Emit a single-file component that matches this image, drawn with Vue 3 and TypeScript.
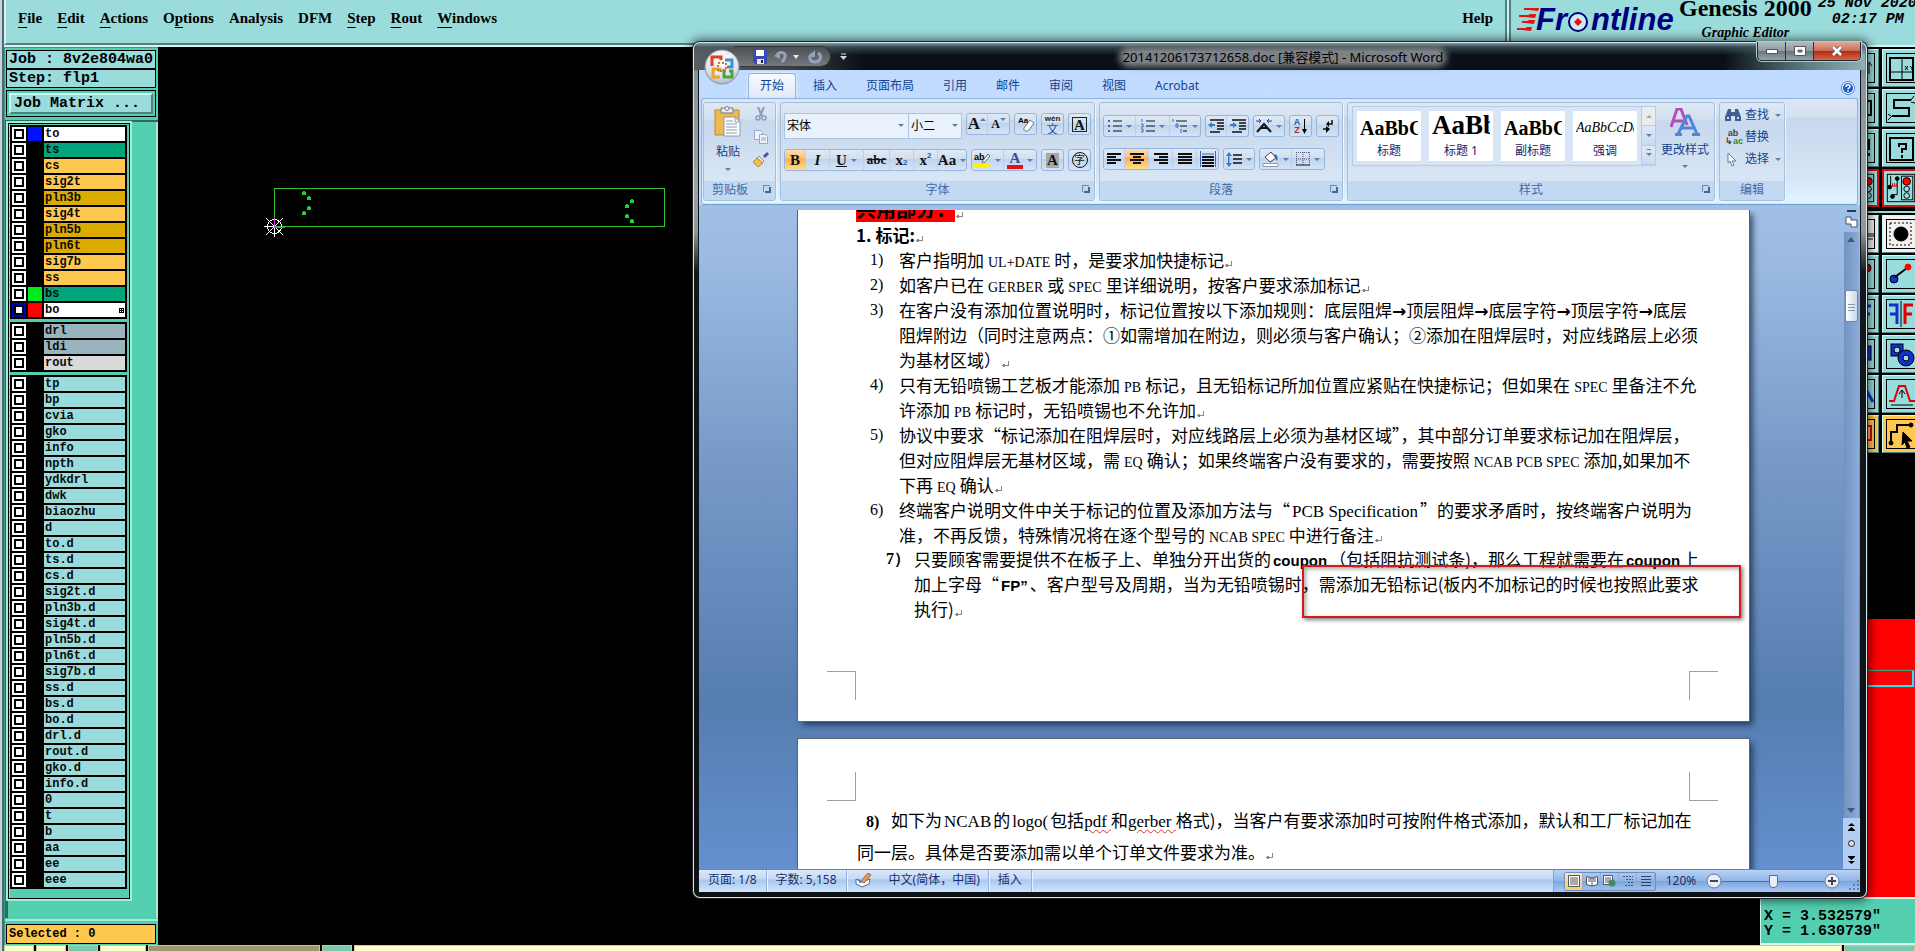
<script setup lang="ts">
import { ref } from 'vue'

interface Layer { name: string; bg: string; swatch?: string; active?: boolean }
interface Seg { text: string; kind: 'cjk' | 'en' | 'bold' | 'roman' | 'typo' | 'arrow' | 'mark' }

const menus = [
  { pre: '', key: 'F', post: 'ile' },
  { pre: '', key: 'E', post: 'dit' },
  { pre: '', key: 'A', post: 'ctions' },
  { pre: 'O', key: 'p', post: 'tions' },
  { pre: 'Analysis', key: '', post: '' },
  { pre: 'DFM', key: '', post: '' },
  { pre: '', key: 'S', post: 'tep' },
  { pre: '', key: 'R', post: 'out' },
  { pre: '', key: 'W', post: 'indows' },
]

const AMBER = '#ffc84f'
const GOLD = '#dbab00'
const GREEN = '#00a57c'
const CYAN = '#9adbdb'

const board: Layer[] = [
  { name: 'to', bg: '#ffffff', swatch: '#0010ff' },
  { name: 'ts', bg: GREEN },
  { name: 'cs', bg: AMBER },
  { name: 'sig2t', bg: AMBER },
  { name: 'pln3b', bg: GOLD },
  { name: 'sig4t', bg: AMBER },
  { name: 'pln5b', bg: GOLD },
  { name: 'pln6t', bg: GOLD },
  { name: 'sig7b', bg: AMBER },
  { name: 'ss', bg: AMBER },
  { name: 'bs', bg: GREEN, swatch: '#00ea1c' },
  { name: 'bo', bg: '#ffffff', swatch: '#ff0000', active: true },
]
const drills: Layer[] = [
  { name: 'drl', bg: '#9ab4bd' },
  { name: 'ldi', bg: '#9ab4bd' },
  { name: 'rout', bg: '#dadada' },
]
const misc: Layer[] = [
  'tp', 'bp', 'cvia', 'gko', 'info', 'npth', 'ydkdrl', 'dwk', 'biaozhu', 'd', 'to.d', 'ts.d', 'cs.d',
  'sig2t.d', 'pln3b.d', 'sig4t.d', 'pln5b.d', 'pln6t.d', 'sig7b.d', 'ss.d', 'bs.d', 'bo.d', 'drl.d',
  'rout.d', 'gko.d', 'info.d', '0', 't', 'b', 'aa', 'ee', 'eee',
].map((name) => ({ name, bg: CYAN }))
const groups = [board, drills, misc]

const tabs = ['开始', '插入', '页面布局', '引用', '邮件', '审阅', '视图', 'Acrobat']
const styles = [
  { sample: 'AaBbC', label: '标题', cls: 's1' },
  { sample: 'AaBb', label: '标题 1', cls: 's2' },
  { sample: 'AaBbC', label: '副标题', cls: 's1' },
  { sample: 'AaBbCcDd', label: '强调', cls: 's4' },
]

/* *x* bold latin, _x_ roman latin, ~x~ flagged by the spelling checker, plain latin is narrow */
function parse(line: string): Seg[] {
  const out: Seg[] = []
  const re = /(\*[^*]+\*|_[^_]+_|~[^~]+~|→|¶| ?[A-Za-z+][A-Za-z+ ]*)/
  for (const part of line.split(re)) {
    if (!part) continue
    const inner = part.slice(1, -1)
    if (part[0] === '*') out.push({ text: inner, kind: 'bold' })
    else if (part[0] === '_') out.push({ text: inner, kind: 'roman' })
    else if (part[0] === '~') out.push({ text: inner, kind: 'typo' })
    else if (part === '→') out.push({ text: part, kind: 'arrow' })
    else if (part === '¶') out.push({ text: '', kind: 'mark' })
    else if (/^ ?[A-Za-z+]/.test(part)) out.push({ text: part.trim(), kind: 'en' })
    else out.push({ text: part, kind: 'cjk' })
  }
  return out
}

const items = [
  { no: '1)', lines: ['客户指明加 UL+DATE 时，是要求加快捷标记¶'] },
  { no: '2)', lines: ['如客户已在 GERBER 或 SPEC 里详细说明，按客户要求添加标记¶'] },
  { no: '3)', lines: [
    '在客户没有添加位置说明时，标记位置按以下添加规则：底层阻焊→顶层阻焊→底层字符→顶层字符→底层',
    '阻焊附边（同时注意两点：①如需增加在附边，则必须与客户确认；②添加在阻焊层时，对应线路层上必须',
    '为基材区域）¶'] },
  { no: '4)', lines: [
    '只有无铅喷锡工艺板才能添加 PB 标记，且无铅标记所加位置应紧贴在快捷标记；但如果在 SPEC 里备注不允',
    '许添加 PB 标记时，无铅喷锡也不允许加¶'] },
  { no: '5)', lines: [
    '协议中要求“标记添加在阻焊层时，对应线路层上必须为基材区域”，其中部分订单要求标记加在阻焊层，',
    '但对应阻焊层无基材区域，需 EQ 确认；如果终端客户没有要求的，需要按照 NCAB PCB SPEC 添加,如果加不',
    '下再 EQ 确认¶'] },
  { no: '6)', lines: [
    '终端客户说明文件中关于标记的位置及添加方法与“_PCB Specification_”的要求矛盾时，按终端客户说明为',
    '准，不再反馈，特殊情况将在逐个型号的 NCAB SPEC 中进行备注¶'] },
  { no: '7）', strong: true, lines: [
    '只要顾客需要提供不在板子上、单独分开出货的*coupon*（包括阻抗测试条)，那么工程就需要在*coupon*上',
    '加上字母“*FP”*、客户型号及周期，当为无铅喷锡时，需添加无铅标记(板内不加标记的时候也按照此要求',
    '执行)¶'] },
].map((i) => ({ no: i.no, strong: 'strong' in i, lines: i.lines.map(parse) }))

const last = [
  '如下为_NCAB_的_logo(_包括~pdf ~和~gerber ~格式)，当客户有要求添加时可按附件格式添加，默认和工厂标记加在',
  '同一层。具体是否要添加需以单个订单文件要求为准。¶',
].map(parse)

const zoom = ref(50)
</script>

<template>
  <div class="desk">
    <header class="top">
      <nav class="menubar">
        <button v-for="m in menus" :key="m.pre + m.key + m.post" class="menu">{{ m.pre }}<u v-if="m.key">{{ m.key }}</u>{{ m.post }}</button>
        <button class="menu help">Help</button>
      </nav>
      <div class="brand">
        <svg class="logo" width="160" height="36" viewBox="0 0 160 36">
          <g fill="#e8120c">
            <path d="M8 8H23L22 10H8zM3 15H20L19 17H3zM6 21H18L17 23H6zM1 28H15L14 30H1z" />
            <path d="M13 10l4-2h6l-1 3zM9 17l5-3h6l-1 4zM9 23l4-3h6l-1 4zM6 30l5-3h5l-1 4z" />
          </g>
          <g fill="#00007e" font-family="Liberation Sans, Arial, sans-serif" font-weight="700" font-style="italic" font-size="31">
            <text x="20" y="30">Fr</text>
            <text x="75" y="30">ntline</text>
          </g>
          <circle cx="62" cy="22" r="9" fill="#cfeaf0" stroke="#00007e" stroke-width="2" />
          <path d="M62 18l4 4-4 4-4-4z" fill="#e8120c" />
        </svg>
        <div class="product">
          <strong>Genesis 2000</strong>
          <em>Graphic Editor</em>
        </div>
        <div class="clock"><span>25 Nov 2020</span><span>02:17 PM</span></div>
      </div>
    </header>

    <main class="work">
      <aside class="left">
        <div class="jobs">
          <div class="field">Job : 8v2e804wa0</div>
          <div class="field">Step: flp1</div>
          <div class="matrix"><button>Job Matrix ...</button></div>
        </div>
        <div class="listwrap">
          <div class="list">
            <ul v-for="(g, gi) in groups" :key="gi" class="layers">
              <li v-for="l in g" :key="l.name">
                <label>
                  <input type="checkbox" :class="{ active: l.active }" />
                  <i class="swatch" :style="{ background: l.swatch ?? '#000' }"></i>
                  <span class="lname" :style="{ background: l.bg }">{{ l.name }}
                    <svg v-if="l.active" width="5" height="5" viewBox="0 0 5 5"><path d="M0 0h5v5H0z" /><path d="M1 1h1v1H1zM3 1h1v1H3zM1 3h1v1H1zM3 3h1v1H3z" fill="#fff" /></svg>
                  </span>
                </label>
              </li>
            </ul>
          </div>
        </div>
        <div class="selected"><div>Selected : 0</div></div>
      </aside>

      <section class="canvas">
        <svg width="560" height="220" viewBox="158 47 560 220" shape-rendering="crispEdges">
          <rect x="274.5" y="188.5" width="390" height="38" fill="none" stroke="#35c035" />
          <g fill="#1fcf2f">
            <path id="dot" d="M303 191h2v1h1v3h-4v-3h1z" />
            <use href="#dot" x="5" y="5" /><use href="#dot" x="5" y="15" /><use href="#dot" y="20" />
            <use href="#dot" x="328" y="8" /><use href="#dot" x="323" y="13" /><use href="#dot" x="323" y="23" /><use href="#dot" x="328" y="28" />
          </g>
          <g stroke="#fff" fill="none">
            <circle cx="274.5" cy="226.5" r="7" />
            <path d="M264 226.5h10M274.5 227v10M266 218l17 17M283 218l-17 17" />
            <path d="M274.5 217v10h10" stroke="#d23cd2" />
          </g>
        </svg>
      </section>

      <aside class="right">
        <div class="tools">
          <button class="tool" aria-label="Zoom fit"><svg viewBox="0 0 36 36"><rect x="3.500" y="3.500" width="29" height="29" /><path d="M27 24V12l3 4" /></svg></button>
          <button class="tool" aria-label="Window coordinates"><svg viewBox="0 0 36 36"><rect x="3.500" y="3.500" width="29" height="29" /><path stroke-width="2" d="M7 8h23v22H7z" /><path d="M19 8v22M7 22h23M22 16l3 4M25 16l-3 4M27 16l2 2 2-2M29 18v2" /></svg></button>
          <button class="tool" aria-label="Shape"><svg viewBox="0 0 36 36"><rect x="3.500" y="3.500" width="29" height="29" /><path stroke-width="2" d="M23 11h6v14h-6" /></svg></button>
          <button class="tool" aria-label="Path"><svg viewBox="0 0 36 36"><rect x="3.500" y="3.500" width="29" height="29" /><path stroke-width="2" d="M28 10H11v8h15v8H9" /><path d="M28 10l3-4M9 26l-4 4M28 12l4 1M5 24l3 2" /></svg></button>
          <button class="tool" aria-label="Warning"><svg viewBox="0 0 36 36"><rect x="3.500" y="3.500" width="29" height="29" /><path stroke-width="2" d="M27 9v11M27 23v3" /></svg></button>
          <button class="tool" aria-label="Query"><svg viewBox="0 0 36 36"><rect x="3.500" y="3.500" width="29" height="29" /><path stroke-width="2" d="M7 8h23v22H7z" /><path stroke-width="2" d="M16 17v-3h7v5h-4v4M19 25v3" /></svg></button>
          <button class="tool hot" aria-label="Netlist left"><svg viewBox="0 0 36 36"><rect x="3.500" y="3.500" width="29" height="29" /><circle cx="27" cy="11" r="4" fill="#f00" /><circle cx="27" cy="19" r="3" /><circle cx="27" cy="26" r="3" /></svg></button>
          <button class="tool hot" aria-label="Netlist"><svg viewBox="0 0 36 36"><rect x="3.500" y="3.500" width="29" height="29" /><path d="M7 5v12M14 8v17H9" /><g fill="#000"><circle cx="6" cy="17" r="2" /><circle cx="14" cy="8" r="2" /><circle cx="9" cy="27" r="2" /></g><path stroke="#e00000" d="M8 16h6M9 13v3M11 13v3M13 13v3" /><rect x="18.500" y="5.500" width="12" height="25" /><circle cx="24" cy="11" r="4" fill="#f00" /><circle cx="24" cy="19" r="3" /><circle cx="24" cy="26" r="3" /></svg></button>
        </div>
        <div class="tools plain">
          <button class="tool" aria-label="Select left"><svg viewBox="0 0 36 36"><rect x="3.500" y="3.500" width="29" height="29" /><path d="M25 17v6h6M27 17v4M29 17v4M31 17v4" /></svg></button>
          <button class="tool" aria-label="Select frame"><svg viewBox="0 0 36 36"><rect x="3.500" y="3.500" width="29" height="29" /><path stroke-dasharray="2 2" d="M7 7h21v22H7z" /><circle cx="18" cy="18" r="7" fill="#000" /></svg></button>
          <button class="tool" aria-label="Move"><svg viewBox="0 0 36 36"><rect x="3.500" y="3.500" width="29" height="29" /><circle cx="25" cy="12" r="4" fill="#e00" /></svg></button>
          <button class="tool" aria-label="Reconnect"><svg viewBox="0 0 36 36"><rect x="3.500" y="3.500" width="29" height="29" /><circle cx="11" cy="23" r="4" fill="#1030d0" /><path stroke-width="2" d="M12 21L24 12" /><circle cx="25" cy="11" r="3" fill="#f00" stroke="#f00" /></svg></button>
          <button class="tool" aria-label="Mirror left"><svg viewBox="0 0 36 36"><rect x="3.500" y="3.500" width="29" height="29" /><path stroke="#1030d0" stroke-width="3" d="M22 27V10h7M22 18h6" /></svg></button>
          <button class="tool" aria-label="Mirror"><svg viewBox="0 0 36 36"><rect x="3.500" y="3.500" width="29" height="29" /><path stroke="#1030d0" stroke-width="3" d="M14 28V9H6M14 18H7" /><path stroke="#e00000" stroke-width="3" d="M22 28V9h8M22 18h7" /><path d="M18 5v26" /></svg></button>
          <button class="tool" aria-label="Copy left"><svg viewBox="0 0 36 36"><rect x="3.500" y="3.500" width="29" height="29" /><rect x="20" y="10" width="9" height="14" fill="#1030d0" /></svg></button>
          <button class="tool" aria-label="Copy"><svg viewBox="0 0 36 36"><rect x="3.500" y="3.500" width="29" height="29" /><g fill="#1030d0"><rect x="8" y="8" width="12" height="12" /><circle cx="23" cy="22" r="8" /></g><circle cx="14" cy="14" r="3" fill="#9adbdb" /><circle cx="23" cy="22" r="3" fill="#9adbdb" /></svg></button>
          <button class="tool" aria-label="Stretch left"><svg viewBox="0 0 36 36"><rect x="3.500" y="3.500" width="29" height="29" /><path stroke="#1030d0" stroke-width="3" d="M22 10l9 16" /></svg></button>
          <button class="tool" aria-label="Stretch"><svg viewBox="0 0 36 36"><rect x="3.500" y="3.500" width="29" height="29" /><path stroke="#e00000" stroke-width="2" d="M6 25h5l5-15h6l5 15h5" /><path d="M19 22v-8l-3 4M19 14l3 4M8 29h22" /></svg></button>
          <button class="tool amber" aria-label="Route left"><svg viewBox="0 0 36 36"><rect x="3.500" y="3.500" width="29" height="29" /><path stroke="#e00000" stroke-width="2" d="M22 10h7v14h-7" /></svg></button>
          <button class="tool amber" aria-label="Route"><svg viewBox="0 0 36 36"><rect x="3.500" y="3.500" width="29" height="29" /><path stroke-width="2" d="M8 27V16h6V9h14" /><circle cx="8" cy="27" r="2" fill="#000" /><circle cx="28" cy="9" r="2" fill="#000" /><path fill="#000" d="M20 16l9 9h-5l3 6-3 1-2-6-3 3z" /></svg></button>
        </div>
        <div class="overview"><i></i></div>
        <div class="coords"><span>X = 3.532579"</span><span>Y = 1.630739"</span></div>
      </aside>
    </main>
    <footer class="strip"><i class="y a"></i><i class="y a"></i><i class="t a"></i><i class="y b"></i><i class="g"></i><i class="t a"></i><i class="y c"></i><i class="t d"></i></footer>

    <article class="word">
      <div class="title">
        <div class="orb">
          <svg width="38" height="38" viewBox="0 0 38 38">
            <defs><radialGradient id="orbg" cx="50%" cy="30%" r="70%"><stop offset="0" stop-color="#fff" /><stop offset="0.7" stop-color="#dfe3ea" /><stop offset="1" stop-color="#a9b3c2" /></radialGradient></defs>
            <circle cx="19" cy="19" r="17" fill="url(#orbg)" stroke="#8c97a8" />
            <g fill="none" stroke-width="3">
              <path d="M9 18V9h9v3" stroke="#d8451c" /><path d="M22 12h7v7h-5" stroke="#3f8fd6" />
              <path d="M17 29h-7v-8h7v3" stroke="#f0a51e" /><path d="M21 21v8h8v-6h-3" stroke="#4ea43c" />
            </g>
            <path d="M15 15h8v8h-8z" fill="none" stroke="#c7742c" stroke-width="2" stroke-dasharray="2 2" />
          </svg>
        </div>
        <div class="qat">
          <button aria-label="保存"><svg width="14" height="14" viewBox="0 0 14 14"><path d="M0 0h14v14H2l-2-2z" fill="#3a49b8" /><path d="M3 0h8v6H3z" fill="#fff" /><path d="M4 9h7v5H4z" fill="#dfe5f5" /><path d="M8 10h2v3H8z" fill="#223" /></svg></button>
          <button aria-label="撤消"><svg width="14" height="14" viewBox="0 0 14 14"><path d="M3 4c5-3 9-1 8 3-.5 2-3 5-3 5" fill="none" stroke="#93a3bd" stroke-width="3" /><path d="M0 6l6-5v8z" fill="#93a3bd" /></svg></button>
          <svg class="gap" width="6" height="4" viewBox="0 0 6 4"><path d="M0 0h6L3 4z" fill="#e8e8e8" /></svg>
          <button aria-label="重复"><svg width="14" height="14" viewBox="0 0 14 14"><path d="M4 4c-4 3-2 8 3 8s8-6 3-9" fill="none" stroke="#93a3bd" stroke-width="3" /><path d="M7 0v7H0z" fill="#93a3bd" /></svg></button>
        </div>
        <svg class="more" width="7" height="8" viewBox="0 0 7 8"><path d="M1 1h5" stroke="#ccd8ea" /><path d="M0 3h7L3.500 7z" fill="#ccd8ea" /></svg>
        <h1><span>20141206173712658.doc [兼容模式] - Microsoft Word</span></h1>
        <div class="winbtns">
          <button aria-label="最小化"><svg width="12" height="5" viewBox="0 0 12 5"><rect x=".5" y=".5" width="11" height="4" fill="#fff" stroke="#556" /></svg></button>
          <button aria-label="最大化"><svg width="12" height="10" viewBox="0 0 12 10"><path d="M.5.5h11v9H.5z" fill="#fff" stroke="#556" /><path d="M4 4h4v2H4z" fill="#888" stroke="#556" /></svg></button>
          <button class="close" aria-label="关闭"><svg width="12" height="10" viewBox="0 0 12 10"><path d="M2 1l8 8M10 1L2 9" stroke="#556" stroke-width="4" /><path d="M2 1l8 8M10 1L2 9" stroke="#fff" stroke-width="2.500" /></svg></button>
        </div>
      </div>

      <div class="client">
        <nav class="tabs">
          <button v-for="(t, i) in tabs" :key="t" :class="{ on: i === 0 }">{{ t }}</button>
          <button class="qhelp" aria-label="帮助"><svg width="14" height="14" viewBox="0 0 14 14"><circle cx="7" cy="7" r="6.500" fill="#fff" stroke="#4a7fd0" /><circle cx="7" cy="7" r="5" fill="#1f58c8" /><path d="M5 6c0-3 4-3 4-.6C9 7 7 6.600 7 8.500M7 9.500V11" stroke="#fff" stroke-width="1.500" fill="none" /></svg></button>
        </nav>

        <div class="ribbon">
          <section class="grp">
            <div class="body clip">
              <button class="paste">
                <svg width="28" height="32" viewBox="0 0 28 32"><path d="M1 4h24v25H1z" fill="#eeb951" stroke="#b98a35" /><path d="M7 2h12v5H7z" fill="#e9edf2" stroke="#6d7a89" /><circle cx="13" cy="2.500" r="2" fill="#fff" stroke="#6d7a89" /><path d="M10 11h11l5 5v14H10z" fill="#fff" stroke="#8a9cb5" /><path d="M21 11v5h5M12 15h7M12 18h11M12 21h11M12 24h11M12 27h11" stroke="#8a9cb5" fill="none" /></svg>
                <span>粘贴</span><i class="car"></i>
              </button>
              <div class="minis">
                <button aria-label="剪切"><svg width="14" height="15" viewBox="0 0 14 15"><path d="M4 0l4 9M10 0L6 9" stroke="#8d9db5" stroke-width="2" /><circle cx="4" cy="11" r="2" fill="none" stroke="#8d9db5" stroke-width="1.500" /><circle cx="10" cy="11" r="2" fill="none" stroke="#8d9db5" stroke-width="1.500" /></svg></button>
                <button aria-label="复制"><svg width="14" height="14" viewBox="0 0 14 14"><path d="M.5.5h6l2 2v7h-8z" fill="#eef2f9" stroke="#98a9c4" /><path d="M5.500 4.500h6l2 2v7h-8zM7 8h5M7 10h5" fill="#eef2f9" stroke="#98a9c4" /></svg></button>
                <button aria-label="格式刷"><svg width="16" height="15" viewBox="0 0 16 15"><path d="M10 4l4-4 2 2-4 4z" fill="#4a4f9c" /><path d="M6 4l5 5-2 2-5-5z" fill="#e9edf5" stroke="#8894aa" /><path d="M4 6l6 5-5 4L0 10z" fill="#f0c04c" stroke="#b88a2c" /></svg></button>
              </div>
            </div>
            <footer class="lead">剪贴板<i class="launch"></i></footer>
          </section>

          <section class="grp">
            <div class="body rows">
              <div class="row r1">
                <div class="combo">
                  <select class="face" aria-label="字体"><option>宋体</option></select><select class="size" aria-label="字号"><option>小二</option></select>
                </div>
                <div class="seg"><button class="w22 big" aria-label="增大字体">A<i class="car up tip"></i></button><button class="w22 sm" aria-label="缩小字体">A<i class="car tip"></i></button></div>
                <div class="seg"><button class="w22" aria-label="清除格式"><svg width="16" height="16" viewBox="0 0 16 16"><text x="0" y="7" font-size="8" font-family="Liberation Sans">Aa</text><path d="M6 12l6-8 4 3-5 7c-2 2-6 1-5-2z" fill="#fff" stroke="#68788f" /></svg></button></div>
                <div class="seg"><button class="w22 wen"><small>wén</small>文</button></div>
                <div class="seg"><button class="w22"><b class="box">A</b></button></div>
              </div>
              <div class="row r2">
                <div class="seg">
                  <button class="w22 on"><b>B</b></button><button class="w24"><i>I</i></button><button class="w34"><u>U</u><i class="car"></i></button>
                  <button class="w26 strike">abc</button><button class="w24">x<sub>2</sub></button><button class="w24">x<sup>2</sup></button><button class="w28">Aa<i class="car"></i></button>
                </div>
                <div class="seg">
                  <button class="w32" aria-label="突出显示"><svg width="17" height="17" viewBox="0 0 17 17"><text x="0" y="8" font-size="9" font-family="Liberation Sans">ab</text><path d="M8 10l6-8 2 2-6 7z" fill="#fff" stroke="#567" /><path d="M0 12h16v4H0z" fill="#fff200" /></svg><i class="car"></i></button>
                  <button class="w32"><span class="fcol">A</span><i class="car"></i></button>
                </div>
                <div class="seg"><button class="w22"><b class="shade">A</b></button></div>
                <div class="seg"><button class="w22"><span class="ring">字</span></button></div>
              </div>
            </div>
            <footer>字体<i class="launch"></i></footer>
          </section>

          <section class="grp">
            <div class="body rows p">
              <div class="row r1">
                <div class="seg">
                  <button class="w32" aria-label="项目符号"><svg width="14" height="14" viewBox="0 0 14 14"><path d="M5 2h9M5 7h9M5 12h9" stroke="#111" /><path d="M0 1h2v2H0zM0 6h2v2H0zM0 11h2v2H0z" fill="#3c66b4" /></svg><i class="car"></i></button>
                  <button class="w34" aria-label="编号"><svg width="14" height="14" viewBox="0 0 14 14"><path d="M5 2h9M5 7h9M5 12h9" stroke="#111" /><path d="M1 0v3M0 5h2v3H0M0 10h2v3H0" stroke="#3c66b4" fill="none" /></svg><i class="car"></i></button>
                  <button class="w30" aria-label="多级列表"><svg width="16" height="15" viewBox="0 0 16 15"><path d="M4 2h11M8 7h7M11 12h4" stroke="#111" /><path d="M1 0v3M4 5h2v3H4zM9 10v4" stroke="#3c66b4" fill="none" /></svg><i class="car"></i></button>
                </div>
                <div class="seg">
                  <button class="w22" aria-label="减少缩进"><svg width="16" height="14" viewBox="0 0 16 14"><path d="M2 1h14M9 4h7M9 7h7M9 10h7M2 13h10" stroke="#111" stroke-width="1.500" /><path d="M0 6l4-3v2h3v2H4v2z" fill="#3c78c8" /></svg></button>
                  <button class="w22" aria-label="增加缩进"><svg width="16" height="14" viewBox="0 0 16 14"><path d="M2 1h14M9 4h7M9 7h7M9 10h7M2 13h10" stroke="#111" stroke-width="1.500" /><path d="M7 6L3 3v2H0v2h3v2z" fill="#3c78c8" /></svg></button>
                </div>
                <div class="seg"><button class="w30" aria-label="中文版式"><svg width="16" height="14" viewBox="0 0 16 14"><path d="M1 13L8 5l7 8M4 9h8" stroke="#111" stroke-width="2" fill="none" /><path d="M0 2h5M3 0l2 2-2 2M16 2h-5M13 0l-2 2 2 2" stroke="#2c3c9c" fill="none" /></svg><i class="car"></i></button></div>
                <div class="seg"><button class="w22 az"><span><b>A</b><b>Z</b></span><svg width="5" height="15" viewBox="0 0 5 15"><path d="M2 0h1v10h2l-2.500 5L0 10h2z" /></svg></button></div>
                <div class="seg"><button class="w22" aria-label="显示编辑标记"><svg width="12" height="14" viewBox="0 0 12 14"><path d="M10 1v4H6M1 10h4" stroke="#111" fill="none" stroke-width="1.500" /><path d="M7 2v6L4 5zM4 7l4 3-4 4z" /></svg></button></div>
              </div>
              <div class="row r2">
                <div class="seg">
                  <button class="w22" aria-label="左对齐"><svg width="14" height="13" viewBox="0 0 14 13"><path d="M0 1h14M0 4h9M0 7h14M0 10h9" stroke="#111" stroke-width="2" /></svg></button>
                  <button class="w24 on" aria-label="居中"><svg width="14" height="13" viewBox="0 0 14 13"><path d="M0 1h14M3 4h8M0 7h14M3 10h8" stroke="#111" stroke-width="2" /></svg></button>
                  <button class="w24" aria-label="右对齐"><svg width="14" height="13" viewBox="0 0 14 13"><path d="M0 1h14M5 4h9M0 7h14M5 10h9" stroke="#111" stroke-width="2" /></svg></button>
                  <button class="w24" aria-label="两端对齐"><svg width="14" height="13" viewBox="0 0 14 13"><path d="M0 1h14M0 4h14M0 7h14M0 10h14" stroke="#111" stroke-width="2" /></svg></button>
                  <button class="w22" aria-label="分散对齐"><svg width="16" height="16" viewBox="0 0 16 16"><path d="M2 6h12M2 9h12M2 12h12M2 15h12" stroke="#111" stroke-width="2" /><path d="M.5 0v16M15.500 0v16M2 3h12" stroke="#3c66b4" /></svg></button>
                </div>
                <div class="seg"><button class="w30" aria-label="行距"><svg width="16" height="15" viewBox="0 0 16 15"><path d="M7 3h9M7 7h9M7 11h9" stroke="#111" stroke-width="1.500" /><path d="M3 0l3 4H0zM3 15l3-4H0zM2 4h1.500v7H2z" fill="#3c78c8" /></svg><i class="car"></i></button></div>
                <div class="seg">
                  <button class="w32" aria-label="底纹"><svg width="17" height="16" viewBox="0 0 17 16"><path d="M3 6l6-5 5 6-6 4z" fill="#fff" stroke="#445" /><path d="M12 3c4 1 4 4 3 7l-2-3z" fill="#3c66b4" /><path d="M1 12.500h15v3H1z" fill="#fff" stroke="#99a" /></svg><i class="car"></i></button>
                  <button class="w32" aria-label="边框"><svg width="14" height="14" viewBox="0 0 14 14"><path d="M.5 0v13M7 0v13M13.500 0v13M0 .5h14M0 7h14" stroke="#557" stroke-dasharray="1 1" /><path d="M0 13h14" stroke="#111" /></svg><i class="car"></i></button>
                </div>
              </div>
            </div>
            <footer>段落<i class="launch"></i></footer>
          </section>

          <section class="grp">
            <div class="body sty">
              <div class="gallery">
                <button v-for="s in styles" :key="s.label" class="card"><span :class="s.cls">{{ s.sample }}</span><small>{{ s.label }}</small></button>
              </div>
              <div class="gscroll"><button aria-label="上一行"><i class="car up"></i></button><button aria-label="下一行"><i class="car"></i></button><button aria-label="其他"><i class="car bar"></i></button></div>
              <button class="change">
                <svg width="30" height="28" viewBox="0 0 30 28"><path d="M1 19L7 1h4l6 16" fill="none" stroke="#b44fb8" stroke-width="3" /><path d="M4 13h9" stroke="#b44fb8" stroke-width="3" /><path d="M8 26L17 8h2l8 18M12 20h12M5 26.500h7M22 26.500h8" fill="none" stroke="#4f86d8" stroke-width="3" /></svg>
                <span>更改样式</span><i class="car"></i>
              </button>
            </div>
            <footer>样式<i class="launch"></i></footer>
          </section>

          <section class="grp">
            <div class="body edit">
              <button><svg width="16" height="14" viewBox="0 0 16 14"><path d="M3 1h3v3h4V1h3l3 8v4h-6V8H6v5H0V9z" fill="#3f5f94" /><path d="M2 10h2M12 10h2" stroke="#cfe0f5" stroke-width="2" /></svg>查找<i class="car"></i></button>
              <button><span class="repl"><b>ab</b><b>↳<em>ac</em></b></span>替换</button>
              <button><svg width="16" height="15" viewBox="0 0 16 15"><path d="M3 1l8 8H7l2 4-2 1-2-5-2 2z" fill="#fff" stroke="#667a99" /></svg>选择<i class="car"></i></button>
            </div>
            <footer>编辑</footer>
          </section>
        </div>

        <div class="docarea">
          <div class="pages">
            <div class="page one">
              <p class="banner"><mark>共用部分：</mark><i class="ret"></i></p>
              <h2>1. 标记:<i class="ret"></i></h2>
              <ol>
                <li v-for="it in items" :key="it.no" :class="{ seven: it.strong }">
                  <span class="no">{{ it.no }}</span>
                  <div>
                    <p v-for="(ln, k) in it.lines" :key="k"><template v-for="(s, j) in ln" :key="j"><i v-if="s.kind === 'mark'" class="ret"></i><span v-else :class="s.kind">{{ s.text }}</span></template></p>
                  </div>
                </li>
              </ol>
              <div class="corners bottom"><i></i><i></i></div>
              <div class="callout"></div>
            </div>
            <div class="page two">
              <div class="corners top-marks"><i></i><i></i></div>
              <div class="eight">
                <p v-for="(ln, k) in last" :key="k"><b v-if="k === 0">8)</b><template v-for="(s, j) in ln" :key="j"><i v-if="s.kind === 'mark'" class="ret"></i><span v-else :class="s.kind">{{ s.text }}</span></template></p>
              </div>
            </div>
          </div>
          <div class="vbar">
            <i class="dash"></i>
            <svg width="13" height="12" viewBox="0 0 13 12"><path d="M1 1h5v3h6v7H6V8H1z" fill="#fff" stroke="#456" /></svg>
            <div class="track"><i class="arr up"></i><b></b><i class="arr"></i></div>
            <div class="nav">
              <svg width="7" height="8" viewBox="0 0 7 8"><path d="M0 3l3.500-3L7 3zM0 7l3.500-3L7 7zM0 7h7v1H0z" /></svg>
              <svg width="7" height="7" viewBox="0 0 7 7"><circle cx="3.500" cy="3.500" r="3" fill="#ddd" stroke="#222" /></svg>
              <svg width="7" height="8" viewBox="0 0 7 8"><path d="M0 5l3.500 3L7 5zM0 1l3.500 3L7 1zM0 0h7v1H0z" /></svg>
            </div>
          </div>
        </div>

        <div class="status">
          <span>页面: 1/8</span><span>字数: 5,158</span>
          <span class="spell"><svg width="17" height="15" viewBox="0 0 17 15"><path d="M1 6l6 3 8-3-1 5-7 3-6-3z" fill="#fff" stroke="#568" /><path d="M6 8l7-8 3 2-7 8z" fill="#e7a04a" stroke="#965" /><path d="M3 6l3 4" stroke="#48c" stroke-width="2" /></svg></span>
          <span class="lang">中文(简体，中国)</span><span>插入</span>
          <div class="view">
            <div class="vbtns">
              <button class="on" aria-label="页面视图"><svg width="12" height="12" viewBox="0 0 12 12"><path d="M.5.500h11v11H.5zM2 3h8M2 5h8M2 7h8M2 9h8" fill="#fff" stroke="#555" /></svg></button>
              <button aria-label="阅读版式"><svg width="12" height="12" viewBox="0 0 12 12"><path d="M.5 1.500L6 3l5.500-1.500v8L6 11 .5 9.500zM6 3v8M2 4h3M2 6h3M7 4h3M7 6h3" fill="#fff" stroke="#555" /></svg></button>
              <button aria-label="Web 版式"><svg width="13" height="12" viewBox="0 0 13 12"><path d="M.5.500h9v9h-9zM2 3h6M2 5h6M2 7h6" fill="#fff" stroke="#555" /><circle cx="9" cy="8" r="3.500" fill="#3c8c6c" /></svg></button>
              <button aria-label="大纲视图"><svg width="12" height="12" viewBox="0 0 12 12"><path d="M1 1.500h10M4 4.500h7M6 7.500h5M3 10.500h8" stroke="#456" stroke-dasharray="2 1" /></svg></button>
              <button aria-label="普通视图"><svg width="12" height="12" viewBox="0 0 12 12"><path d="M1 1.500h10M1 4.500h10M1 7.500h10M1 10.500h10" stroke="#345" /></svg></button>
            </div>
            <button class="pct">120%</button>
            <button class="rnd" aria-label="缩小"><svg width="16" height="16" viewBox="0 0 16 16"><circle cx="8" cy="8" r="7" fill="#e8eef8" stroke="#66789a" /><path d="M4 8h8" stroke="#445" stroke-width="2" /></svg></button>
            <input v-model="zoom" type="range" min="0" max="100" aria-label="缩放" />
            <button class="rnd" aria-label="放大"><svg width="16" height="16" viewBox="0 0 16 16"><circle cx="8" cy="8" r="7" fill="#e8eef8" stroke="#66789a" /><path d="M4 8h8M8 4v8" stroke="#445" stroke-width="2" /></svg></button>
            <svg class="grip" width="12" height="12" viewBox="0 0 12 12"><path d="M9 1h2v2H9zM5 5h2v2H5zM9 5h2v2H9zM1 9h2v2H1zM5 9h2v2H5zM9 9h2v2H9z" fill="#5f7fae" /></svg>
          </div>
        </div>
      </div>
    </article>
  </div>
</template>

<style>
body { background: #000; overflow: hidden; }
</style>

<style scoped>
* { box-sizing: border-box; }
button { appearance: none; border: 0; padding: 0; margin: 0; background: none; font: inherit; color: inherit; }
p, h1, h2, ol, ul { margin: 0; padding: 0; list-style: none; }
svg { display: block; flex: none; }

.desk { position: relative; height: 100vh; display: flex; flex-direction: column; overflow: hidden; background: #000; font-family: "Liberation Mono", monospace; }
.desk::before { content: ""; position: absolute; left: 0; top: 0; bottom: 0; width: 4px; background: linear-gradient(90deg, #c4d4d8 0 2px, #4e6878 2px); }

/* header */
.top { flex: none; height: 47px; display: flex; padding-left: 4px; background: #9adbdb; border-bottom: 2px solid #d8f4f2; }
.menubar { flex: 1; display: flex; align-items: flex-start; gap: 15px; padding: 8px 12px 0 12px; border-left: 2px solid #d2f2f2; border-bottom: 2px solid #4e8282; font: bold 15px/18px "Liberation Serif", serif; }
.menu { height: 20px; }
.menu u { text-underline-offset: 4px; }
.help { margin-left: auto; }
.brand { width: 410px; display: flex; border-left: 2px solid #4e8282; box-shadow: inset 2px 0 #d2f2f2, inset 4px 0 #4e8282; padding-left: 9px; overflow: hidden; }
.product { display: flex; flex-direction: column; align-items: center; flex: none; margin-left: 3px; font-family: "Liberation Serif", serif; font-weight: bold; white-space: nowrap; }
.product strong { font-size: 24px; line-height: 26px; margin-top: -5px; }
.product em { font-size: 14px; line-height: 20px; margin-top: 2px; }
.clock { display: flex; flex-direction: column; align-items: flex-start; flex: none; margin-left: 6px; margin-top: -4px; font: italic bold 15px/16px "Liberation Mono", monospace; white-space: nowrap; }
.clock span:last-child { margin-left: 14px; }

.work { flex: 1; display: flex; min-height: 0; }

/* left panel */
.left { width: 154px; margin-left: 4px; flex: none; display: flex; flex-direction: column; background: #53cfb0; border: solid #3a9c86; border-width: 1px 0 0 1px; }
.jobs { padding: 2px 2px 3px 1px; border-bottom: 2px solid #2d6b5b; font: bold 15px/17px "Liberation Mono", monospace; }
.field { height: 19px; padding-left: 2px; background: #9adbdb; border: 1px solid #000; white-space: nowrap; }
.matrix { margin-top: 2px; padding: 2px; border: 1px solid #000; height: 27px; }
.matrix button { display: block; width: 100%; height: 21px; text-align: left; padding-left: 3px; background: #9adbdb; border: 2px solid; border-color: #c8fff4 #4e8282 #4e8282 #c8fff4; }
.listwrap { flex: 1; padding: 1px 26px 0 0; border-left: 3px solid #2d6b5b; border-right: 2px solid #a4ecd8; min-height: 0; }
.list { border: 1px solid #000; outline: 2px solid #a4ecd8; padding: 1px 2px 9px 1px; display: flex; flex-direction: column; gap: 3px; box-shadow: inset 1px 0 #8fe0cc; }
.layers { background: #000; padding: 2px 2px 0; }
.layers label { display: flex; gap: 2px; height: 16px; }
.layers input { appearance: none; margin: 0; width: 14px; height: 14px; background: #fff; border: 2px solid #fff; outline: 0; box-shadow: inset 0 0 0 2px #000; flex: none; }
.layers input.active { border-color: #0000b8; }
.swatch { width: 14px; height: 14px; flex: none; }
.lname { flex: 1; height: 14px; padding: 0 1px; display: flex; align-items: center; justify-content: space-between; font: bold 12px/14px "Liberation Mono", monospace; color: #0a0a0a; }
.selected { margin-top: 1px; padding: 3px 2px 2px 1px; height: 26px; border-top: 2px solid #a4ecd8; }
.selected div { height: 20px; padding-left: 2px; background: #ffc84f; border: 1px solid #000; font: bold 12px/18px "Liberation Mono", monospace; }

.canvas { flex: 1; min-width: 0; overflow: hidden; background: #000; }

/* right panel */
.right { width: 155px; flex: none; display: flex; flex-direction: column; overflow: hidden; }
.tools { flex: none; margin-left: 81px; display: grid; grid-template-columns: 38px 38px; grid-auto-rows: 38px; gap: 2px 3px; padding: 2px 0 4px; border-bottom: 2px solid #9adbdb; background: #000; }
.tools.plain { padding: 2px 0 0; border: 0; }
.tool { background: #9adbdb; border: 1px solid; border-color: #c8fff4 #4e8282 #4e8282 #c8fff4; }
.tool svg { width: 36px; height: 36px; fill: none; stroke: #000; }
.hot { border: 2px solid #d01010; }
.hot svg { width: 34px; height: 34px; }
.plain .tool:nth-child(2), .plain .tool:nth-child(1) { background: #f4f0f0; }
.tool.amber { background: #ffc84f; }
.overview { flex: 1; margin-top: 166px; background: #f00; padding-top: 51px; }
.overview i { display: block; height: 17px; margin-right: 1px; border: 2px solid #2ee6e6; border-top: 1px solid #3aa87a; outline: 1px solid #8c3070; }
.coords { flex: none; height: 48px; border: solid #d8f4f2; border-width: 2px 0 2px 1px; background: #53cfb0; padding: 10px 0 0 3px; display: flex; flex-direction: column; font: bold 15px/15px "Liberation Mono", monospace; white-space: nowrap; }

.strip { flex: none; height: 6px; margin-left: 4px; display: flex; gap: 2px; }
.strip i { border: 1px solid #c8c890; border-bottom: 0; }
.y { background: #ffffc8; }
.t { background: #7cc8ac; }
.a { width: 30px; }
.b { width: 46px; }
.g { width: 172px; background: #9a9a6c; }
.c { flex: 1; }
.d { width: 71px; }

/* word processor window */
.word { position: absolute; left: 693px; right: 48px; top: 42px; bottom: 53px; display: flex; flex-direction: column; padding: 0 7px 6px 6px; border-radius: 7px; background: linear-gradient(180deg, #5d7480 0, #8a9699 40px, #9aa2a5 150px, #8f9799 190px, #14181b 230px, #0c1214 100%); box-shadow: inset 0 0 0 1px #d5e4e8, 0 0 0 1px #222, 0 0 10px 3px rgba(0, 0, 0, .55); font: 12px/16px "Noto Sans", "Noto Sans CJK SC", sans-serif; color: #15428b; }
.title { flex: none; position: relative; height: 27px; display: flex; align-items: center; padding-left: 40px; margin: 1px -5px 0; border-radius: 6px 6px 0 0; background: linear-gradient(180deg, #7f9fa8 0, rgba(70, 90, 100, .7) 4px, rgba(20, 26, 32, 0) 12px), linear-gradient(90deg, #5b5f61 0, #3a3d40 100px, #0b1016 170px, #0b1016 88%, #5a7c82 95%, #8fb0b4 100%); }
.orb { position: absolute; left: 9px; top: 5px; z-index: 2; }
.qat { height: 21px; display: flex; align-items: center; gap: 7px; padding: 0 8px 0 19px; border-radius: 0 11px 11px 0; background: linear-gradient(#4c5054, #74797d); border: 1px solid #33373a; border-left: 0; }
.qat .gap { margin-left: -2px; margin-right: 2px; }
.more { margin-left: 9px; }
.title h1 { flex: 1; text-align: center; font: 13px/20px "Noto Sans", "Noto Sans CJK SC", sans-serif; color: #000; margin-right: 38px; white-space: nowrap; }
.title h1 span { display: inline-block; line-height: 12px; border-radius: 6px; background: rgba(138, 142, 146, .9); box-shadow: 0 0 6px 4px rgba(138, 142, 146, .9); }
.winbtns { align-self: flex-start; display: flex; margin-right: 4px; margin-top: -1px; border: 1px solid #20282c; border-top: 0; border-radius: 0 0 5px 5px; overflow: hidden; box-shadow: 0 0 0 1px #b6c8cc; }
.winbtns button { width: 28px; height: 18px; display: grid; place-items: center; background: linear-gradient(#b0bcc0, #8c989c 50%, #66757a 50%, #93a5aa); border-right: 1px solid #333; }
.winbtns .close { width: 46px; border: 0; background: linear-gradient(#e0a898, #cc6a54 50%, #b02a12 50%, #d4674a); }

.client { flex: 1; min-height: 0; display: flex; flex-direction: column; background: #bfdbff; outline: 1px solid #10161c; overflow: hidden; }
.tabs { flex: none; height: 28px; display: flex; padding: 3px 5px 0 49px; background: linear-gradient(#bfdbff, #c3dcff); }
.tabs button { padding: 0 14px; margin-right: 1px; height: 25px; line-height: 22px; }
.tabs button.on { background: linear-gradient(#f6faff, #dfe9f6); border: 1px solid #8db2e3; border-bottom: 0; border-radius: 3px 3px 0 0; box-shadow: 0 0 3px #ffe; padding: 0 11px; margin: 0 3px 0 0; line-height: 20px; }
.tabs .qhelp { margin-left: auto; padding: 4px 0 0; margin-right: 0; }

.ribbon { flex: none; height: 106px; margin: 0 2px; display: flex; gap: 4px; padding: 3px 1px; border: 1px solid #8db2e3; border-radius: 3px; background: linear-gradient(#dce7f5 0, #d3e0f0 18px, #c7d8ed 19px, #d6e6f7 80px, #e0f4ff); border-bottom-color: #c4f0ff; box-shadow: 0 1px #6f9fd0; }
.grp { display: flex; flex-direction: column; flex: none; height: 99px; border: 1px solid #a3bfdc; border-radius: 3px; background: linear-gradient(#dee8f5 0, #d3e0f0 16px, #c7d8ed 17px, #d8e6f5 78px); box-shadow: 1px 1px #edf5ff; }
.body { flex: 1; min-height: 0; }
.grp footer { flex: none; position: relative; height: 19px; line-height: 18px; text-align: center; background: #c2d9f1; color: #3e6aaa; border-radius: 0 0 3px 3px; }
.grp footer.lead { text-align: left; padding-left: 8px; }
.launch { position: absolute; right: 5px; top: 4px; width: 7px; height: 7px; border: solid #6788b4; border-width: 1px 0 0 1px; }
.launch::after { content: ""; position: absolute; right: -1px; bottom: -1px; width: 4px; height: 4px; border: solid #44668f; border-width: 0 2px 2px 0; }
.car { display: inline-block; flex: none; border: 3px solid transparent; border-top-color: #5b7fb3; border-bottom: 0; width: 0; height: 0; }
.car.up { border-top: 0; border-bottom: 3px solid #a0a8b4; }
.car.bar { box-shadow: 0 -5px 0 -1px #5b7fb3; }

.clip { display: flex; gap: 10px; padding: 3px 6px 0 10px; }
.paste { display: flex; flex-direction: column; align-items: center; justify-content: flex-start; gap: 6px; width: 28px; }
.paste .car { margin-top: 2px; }
.minis { display: flex; flex-direction: column; gap: 8px; padding-top: 1px; width: 17px; align-items: center; }
.rows { padding: 10px 3px 0; }
.rows.p { padding-top: 12px; }
.row { display: flex; gap: 4px; align-items: flex-start; }
.row.r1 { height: 36px; }
.rows.p .r1 { height: 33px; }
.combo { position: relative; display: flex; }
.combo select { appearance: none; height: 26px; border: 1px solid #abc4e4; border-radius: 0; padding: 0 2px; font: inherit; color: #000; background: #e9f1fb; }
.combo .face { width: 125px; }
.combo .size { width: 53px; border-left: 0; }
.combo::before, .combo::after { content: ""; position: absolute; top: 11px; left: 114px; border: 3px solid transparent; border-top-color: #5b7fb3; border-bottom: 0; pointer-events: none; }
.combo::after { left: 168px; }
.seg { display: flex; height: 22px; border: 1px solid #98b6dc; border-radius: 3px; background: linear-gradient(#dfe9f6, #cfdef0 45%, #bfd3ec 46%, #d3e4f8); overflow: hidden; }
.seg button { display: flex; align-items: center; justify-content: center; gap: 2px; height: 20px; color: #111; font: bold 15px/20px "Liberation Serif", serif; border-right: 1px solid #bdd0ea; }
.seg button:last-child { border-right: 0; }
.seg .car { margin-left: 2px; }
.seg .car.tip { align-self: flex-start; margin: 4px 0 0 -2px; }
.seg .car.up { border-bottom-color: #5b7fb3; }
.w22 { width: 21px; } .w24 { width: 24px; } .w26 { width: 26px; } .w28 { width: 28px; } .w30 { width: 30px; } .w32 { width: 32px; } .w34 { width: 34px; }
.seg .on { background: linear-gradient(#fbdbb5, #fcc27a 40%, #fbae4c 45%, #fddf8c); }
.seg sup, .seg sub { font: bold 8px/8px "Liberation Sans", sans-serif; color: #2f55a8; align-self: flex-start; margin: 2px 0 0 -2px; }
.seg sub { align-self: flex-end; margin: 0 0 3px -2px; }
.seg .sm { font-size: 12px; }
.seg .big { font-size: 17px; }
.seg .strike { text-decoration: line-through; font-size: 13px; }
.seg .wen { flex-direction: column; gap: 0; font: 12px/11px "Noto Sans CJK SC", sans-serif; color: #2f4fae; }
.wen small { font: bold 8px/8px "Liberation Sans", sans-serif; color: #222; }
.box { border: 1px solid #222; width: 15px; height: 15px; line-height: 14px; }
.shade { background: #a8a8a8; width: 13px; line-height: 15px; }
.fcol { border-bottom: 4px solid #e31010; color: #33518c; line-height: 13px; width: 16px; }
.ring { width: 16px; height: 16px; border: 1px solid #111; border-radius: 50%; font: 11px/13px "Noto Sans CJK SC", sans-serif; }
.az span { display: flex; flex-direction: column; font: bold 9px/8px "Liberation Sans", sans-serif; color: #3058a8; }
.az b:last-child { color: #a03030; }

.sty { display: flex; padding: 3px 5px 0 4px; }
.gallery { display: flex; gap: 8px; padding: 4px; height: 60px; border: 1px solid #b4cde8; background: #d7e5f7; }
.card { width: 64px; height: 50px; background: #fff; display: flex; flex-direction: column; overflow: hidden; color: #1a1a6c; }
.card span { height: 31px; width: 58px; margin-left: 3px; overflow: hidden; text-align: left; color: #000; font: bold 20px/34px "Liberation Serif", serif; white-space: nowrap; }
.card .s2 { font-size: 27px; line-height: 29px; }
.card .s4 { font: italic 14px/34px "Liberation Serif", serif; }
.card small { font-size: 12px; line-height: 18px; text-align: center; width: 64px; }
.gscroll { display: flex; flex-direction: column; width: 14px; height: 60px; border: 1px solid #b4cde8; border-left: 0; }
.gscroll button { flex: 1; display: grid; place-items: center; border-bottom: 1px solid #b4cde8; background: linear-gradient(#dfe9f7, #c9dbf1); }
.gscroll button:first-child { background: #ececec; }
.change { display: flex; flex-direction: column; align-items: center; justify-content: flex-start; padding: 2px 0 0 5px; gap: 6px; }
.change .car { margin-top: 1px; }
.edit { display: flex; flex-direction: column; gap: 6px; padding: 4px 3px 0 5px; }
.edit button { display: flex; align-items: center; gap: 4px; height: 16px; white-space: nowrap; }
.edit .car { margin-left: 2px; }
.repl { width: 16px; display: flex; flex-direction: column; font: bold 9px/8px "Liberation Sans", sans-serif; color: #444; }
.repl em { font-style: normal; color: #2b8a2b; }

/* document */
.docarea { flex: 1; min-height: 0; display: flex; margin-top: 1px; padding-top: 5px; background: linear-gradient(180deg, #a2c0e6 0, #9abae2 60px, #7699c8 260px, #567db0 500px, #6490cf 100%); overflow: hidden; }
.pages { flex: 1; min-width: 0; overflow: hidden; display: flex; flex-direction: column; gap: 18px; padding: 0 93px 0 99px; }
.page { position: relative; background: #fff; flex: none; color: #000; box-shadow: 0 0 0 1px #5a6572, 4px 4px 6px rgba(20, 35, 60, .7); font: 17px/25px "Noto Sans CJK SC", sans-serif; }
.one { height: 511px; clip-path: inset(0 -12px -12px -12px); }
.two { height: 300px; }
.page p { white-space: nowrap; height: 25px; }
.page .banner { padding-left: 58px; display: flex; align-items: flex-end; height: 12px; overflow: hidden; }
.banner mark { background: #f00; font: bold 20px/26px "Noto Sans CJK SC", sans-serif; width: 99px; height: 26px; }
.banner .ret { margin-bottom: 4px; }
.page h2 { padding-left: 58px; height: 25px; font: bold 17px/25px "Noto Sans CJK SC", sans-serif; }
.page ol li { display: flex; padding-left: 72px; }
.no { width: 29px; font: 16px/25px "Liberation Serif", serif; flex: none; }
.page ol .seven { padding-left: 88px; margin-top: -1px; }
.seven .no { width: 28px; font-weight: bold; white-space: nowrap; }
.en { font: 14px/24px "Liberation Serif", serif; margin: 0 4px; }
.roman { font: 17px/24px "Liberation Serif", serif; margin: 0 2px; }
.typo { font: 17px/24px "Liberation Serif", serif; white-space: pre; text-decoration: underline wavy #e03030 1px; text-underline-offset: 2px; }
.bold { font: bold 15px/24px "Liberation Sans", sans-serif; margin: 0 2px; }
.arrow { font: bold 17px/24px "DejaVu Sans", sans-serif; }
.ret { display: inline-block; width: 7px; height: 6px; margin-left: 1px; background: linear-gradient(#888, #888) right 0 top 0 / 1px 5px no-repeat, linear-gradient(#888, #888) left 0 top 4px / 7px 1px no-repeat, linear-gradient(#888, #888) left 1px top 3px / 2px 3px no-repeat; }
.corners { position: absolute; left: 29px; right: 31px; display: flex; justify-content: space-between; }
.corners i { width: 29px; height: 29px; border: 0 solid #a0a0a0; }
.corners.bottom { bottom: 21px; }
.corners.top-marks { top: 33px; }
.bottom i:first-child { border-width: 1px 1px 0 0; } .bottom i:last-child { border-width: 1px 0 0 1px; }
.top-marks i:first-child { border-width: 0 1px 1px 0; } .top-marks i:last-child { border-width: 0 0 1px 1px; }
.callout { position: absolute; left: 504px; right: 8px; top: 355px; height: 53px; border: 2px solid #cf1b1b; box-shadow: 2px 2px 4px rgba(0, 0, 0, .5), inset 2px 2px 4px rgba(0, 0, 0, .35); }
.eight { padding: 65px 0 0 59px; }
.page .eight p { height: 32px; line-height: 32px; }
.eight b { display: inline-block; width: 34px; padding-left: 9px; font: bold 16px/24px "Liberation Serif", serif; }

.vbar { width: 18px; flex: none; display: flex; flex-direction: column; align-items: center; }
.dash { width: 9px; height: 2px; margin-bottom: 4px; background: #1d3c66; }
.track { flex: 1; width: 15px; margin-top: 4px; display: flex; flex-direction: column; align-items: center; background: linear-gradient(90deg, #7393c0, #8cabd8); padding: 5px 0; }
.track b { margin-top: 48px; width: 13px; height: 32px; border: 1px solid #6d87a8; border-radius: 2px; background: repeating-linear-gradient(transparent 0 2px, #8296b0 2px 3px) center / 7px 9px no-repeat, linear-gradient(90deg, #fff, #c9d8ec); }
.arr { border: 4px solid transparent; border-top: 5px solid #3c5a86; border-bottom: 0; margin-top: auto; }
.arr.up { margin: 0; border-top: 0; border-bottom: 5px solid #3c5a86; }
.nav { width: 17px; height: 51px; display: flex; flex-direction: column; align-items: center; justify-content: space-around; background: #b3cef3; }

.status { flex: none; height: 23px; display: flex; background: linear-gradient(#d9e8fb 0, #c4daf7 40%, #aac8ee 45%, #d0e4fc); border-top: 1px solid #5f86b8; color: #1c2f6c; line-height: 20px; white-space: nowrap; }
.status > span { padding: 0 9px; border-right: 1px solid #8fb2de; box-shadow: 1px 0 #e8f2ff; }
.status > .spell { padding: 3px 8px 0 8px; border: 0; box-shadow: none; }
.status > .lang { padding-right: 8px; }
.view { margin-left: auto; display: flex; align-items: center; gap: 8px; padding: 0 0 0 10px; border-left: 1px solid #7fa3d2; background: linear-gradient(#b8d2f5, #8fb4e6 50%, #7ea6dc 52%, #a8c9f4); }
.vbtns { display: flex; height: 19px; border: 1px solid #6c8fc0; border-radius: 2px; }
.vbtns button { width: 18px; display: grid; place-items: center; border-right: 1px solid #8fb0dc; }
.vbtns .on { background: linear-gradient(#fde3b8, #fdc873); }
.pct { width: 34px; }
.rnd { width: 16px; }
.view input { appearance: none; width: 102px; height: 16px; margin: 0 -8px; background: linear-gradient(#51709f, #51709f) center / 100% 1px no-repeat; }
.view input::-webkit-slider-thumb { appearance: none; width: 9px; height: 13px; background: #e8eef8; border: 1px solid #51709f; border-radius: 1px 1px 5px 5px; }
.grip { margin-top: 8px; }
</style>
